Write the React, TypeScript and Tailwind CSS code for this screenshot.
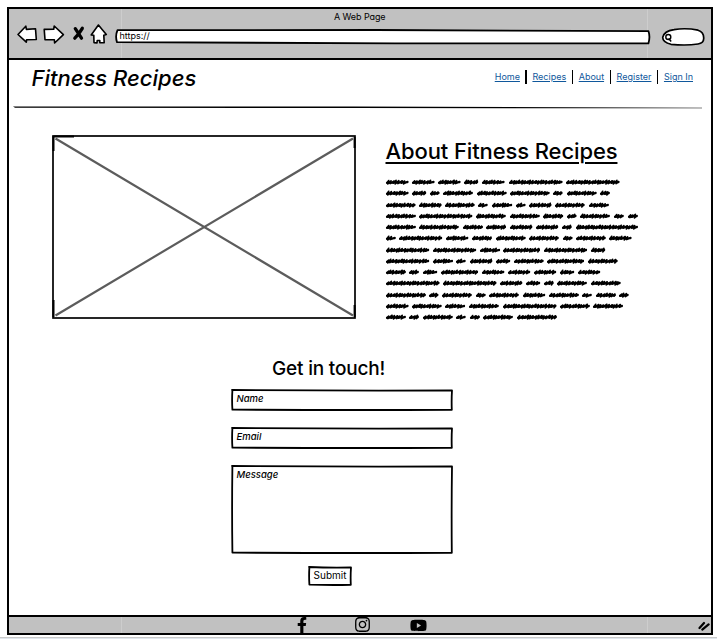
import React from "react";
import { FaFacebookF, FaInstagram, FaYoutube } from "react-icons/fa";

// Word widths of each scribbled line, in pixels.
const scribbles: number[][] = [
  [22.3, 22.3, 22.3, 14, 22.3, 53.3, 53.3],
  [22.3, 14, 9.3, 29.6, 29.4, 39.4, 9.3, 29.4, 9.6],
  [29.3, 22.3, 29.4, 9.4, 20, 9.3, 22.2, 29.4, 19.6],
  [29.6, 53.1, 29.5, 29.5, 20, 9.3, 29.6, 9.5, 9.6],
  [29.6, 39.5, 19.7, 19.8, 22.1, 22, 9.4, 61.7],
  [9.5, 43, 22.1, 19.6, 29.4, 29.5, 9.3, 29.5, 22.3],
  [43, 43, 19.9, 36.8, 42.9, 14],
  [43, 19.8, 9.4, 22.1, 14, 29.4, 36.9, 29.4],
  [19.6, 9.6, 14, 36.9, 22.1, 22, 22, 14, 22],
  [53.3, 53.2, 22.1, 14, 9.4, 29.6, 29.4],
  [39.6, 9.2, 29.5, 9.4, 29.5, 22, 29.6, 9.5, 19.6, 9.4],
  [22.3, 29.4, 19.9, 29.5, 53.2, 29.6, 29.7],
  [19.6, 9.6, 29.5, 9.4, 9.6, 29.6, 39.6],
];

function Scribble({ w, seed }: { w: number; seed: number }) {
  const y = 3;
  let d = `M0.8 ${y + 0.9}`;
  let i = seed;
  for (let x = 1.4; x < w - 2; x += 2 + ((i * 7) % 5) * 0.35) {
    const up = 1 + ((i * 3) % 4) * 0.25;
    d += ` L${(x + 1.3).toFixed(2)} ${(y - up).toFixed(2)} L${(x + 0.4).toFixed(2)} ${(y + 1.3 + ((i * 5) % 3) * 0.3).toFixed(2)}`;
    i++;
  }
  d += ` L${(w - 0.6).toFixed(2)} ${y - 0.5}`;
  return (
    <svg width={w} height="7" className="block shrink-0 overflow-visible" fill="none" stroke="#000">
      <path d={d} strokeWidth="1.6" strokeLinecap="round" strokeLinejoin="round" />
      <path d={`M0.9 ${y + 0.7} L${w - 0.8} ${y + 0.2}`} strokeWidth="2" strokeLinecap="round" />
    </svg>
  );
}

function Sketch({ w, h }: { w: number; h: number }) {
  return (
    <svg width={w} height={h} className="absolute inset-0" fill="none" stroke="#000" strokeLinecap="round" strokeLinejoin="round">
      <path d={`M1 1 Q${w / 2} 1.8 ${w - 1} 1.4 Q${w - 1.6} ${h / 2} ${w - 1.2} ${h - 1.2} Q${w / 2} ${h - 0.7} 1.4 ${h - 1.4} Q0.8 ${h / 2} 1.4 1`} strokeWidth="1.8" />
    </svg>
  );
}

function Field({ label, w, h, className }: { label: string; w: number; h: number; className: string }) {
  return (
    <div className={"relative w-[222px] " + className}>
      <Sketch w={w} h={h} />
      <div className="pl-[5.5px] pt-[4px] text-[9.5px] leading-[12px] font-medium italic">{label}</div>
    </div>
  );
}

function Sep() {
  return <span className="h-[14px] w-[1.5px] bg-black" />;
}

function Seams() {
  return (
    <>
      <span className="absolute inset-y-0 left-[112.5px] w-px bg-[#cdcdcd]" />
      <span className="absolute inset-y-0 left-[638.5px] w-px bg-[#cdcdcd]" />
    </>
  );
}

export default function App() {
  return (
    <div className="flex h-[639px] w-[717px] flex-col overflow-hidden bg-white font-['Inter','Liberation_Sans',sans-serif] text-black [font-feature-settings:'cv11','ss03']">
      <div className="ml-[6.5px] mt-[7px] flex h-[628px] w-[706.5px] flex-col border-2 border-black">
        <header className="relative h-[51px] border-b-2 border-black bg-[#c1c1c1]">
          <Seams />
          <div className="relative pt-[2px] text-center text-[9px] leading-[12px] tracking-[-0.01em]">A Web Page</div>
          <div className="relative flex h-[25px] items-center pl-[7px]">
            <svg width="93" height="24" viewBox="16 23 93 24" fill="#fff" stroke="#000" strokeWidth="1.6" strokeLinejoin="round" strokeLinecap="round">
              <path d="M18 33.5 L25.8 25.2 L26.4 28.4 L35.5 27.8 L36.3 38.5 L26.6 38.7 L26.3 41.2 Z" />
              <path d="M44.2 28.4 L53.7 28.3 L54.2 25 L63.4 33.7 L54.6 42 L54.4 38.8 L45 38.6 Z" />
              <path d="M75.3 27.7 L81.5 37.2 M82.3 27.3 Q79 33 74.8 37.2" fill="none" strokeWidth="3.3" />
              <path d="M98.4 24 L106.3 33.4 L103.8 34.2 L104.2 41.8 L99.8 41.8 L99.8 39.5 L97.2 39.5 L97 42 L94 41.6 L93.8 34.3 L91.2 34 Z" />
            </svg>
            <div className="relative ml-[6.5px] mt-[3px] h-[16px] w-[536px]">
              <svg width="536" height="16" className="absolute inset-0" fill="#fff" stroke="#000" strokeWidth="1.8" strokeLinejoin="round">
                <path d="M2.5 1.2 L260 1 L533.5 2.2 Q535.4 8 533.4 14.4 L280 14.3 L2 13.2 Q0 7 2.5 1.2Z" />
              </svg>
              <span className="relative block pl-[4.5px] pt-[1px] text-[9px] leading-[12px]">https://</span>
            </div>
            <svg width="44" height="20" viewBox="661 26 44 20" className="ml-[9.5px] mt-[2px]" fill="#fff" stroke="#000" strokeWidth="1.7">
              <path d="M674 28.6 Q686 26.6 698 29.2 Q704 31 703.7 37.5 Q703.7 42.2 698 43 Q686 44.8 671 43.3 Q662.3 41 662.8 36.2 Q664 30 674 28.6Z" />
              <circle cx="668.3" cy="36" r="2.5" strokeWidth="1.4" />
              <path d="M668.6 37.5 L671.2 40.5" strokeWidth="1.5" />
            </svg>
          </div>
        </header>

        <div className="flex h-[46px] items-start justify-between pl-[23px] pr-[18px]">
          <div className="pt-[5px] text-[22px] font-medium italic leading-[27px]">Fitness Recipes</div>
          <nav className="flex items-center gap-[5.5px] pt-[10px] text-[9px] leading-[14px] text-[#10589c]">
            <a className="underline underline-offset-1">Home</a>
            <Sep />
            <a className="underline underline-offset-1">Recipes</a>
            <Sep />
            <a className="underline underline-offset-1">About</a>
            <Sep />
            <a className="underline underline-offset-1">Register</a>
            <Sep />
            <a className="underline underline-offset-1">Sign In</a>
          </nav>
        </div>
        <svg width="690" height="4" className="ml-[4.5px] shrink-0">
          <path d="M0 0.6 L340 0.5 L689 1.8 L689 2.3 L340 2.1 L2 1.8Z" />
        </svg>

        <main className="grow">
          <section className="flex pl-[43.5px] pt-[25px]">
            <svg width="304" height="184" className="shrink-0" fill="none" stroke="#000">
              <rect x="1" y="1" width="302" height="182" strokeWidth="1.7" />
              <path d="M1.5 1.5 H22 M1.5 1 V16 M302.6 2 V13 M1.5 165 V182 M302.6 170 V182" strokeWidth="2" />
              <path d="M3.5 3.5 L301 180.5 M301 3.5 L3.5 180.5" stroke="#5c5c5c" strokeWidth="2.2" />
            </svg>
            <div className="ml-[29.5px]">
              <h1 className="mt-[2px] whitespace-nowrap text-[22px] font-medium leading-[28px] tracking-[-0.005em] underline decoration-2 underline-offset-[2.5px]">About Fitness Recipes</h1>
              <div className="mt-[14px] flex flex-col">
                {scribbles.map((line, r) => (
                  <div key={r} className="flex h-[11.27px] gap-[4px]">
                    {line.map((w, c) => (
                      <Scribble key={c} w={w} seed={r * 3 + c * 5 + Math.round(w)} />
                    ))}
                  </div>
                ))}
              </div>
            </div>
          </section>
          <section className="ml-[222.5px] mt-[32px] flex w-[222px] flex-col">
            <h2 className="ml-[41px] whitespace-nowrap text-[19px] font-medium leading-[24px] tracking-[-0.01em]">Get in touch!</h2>
            <Field label="Name" w={222} h={22} className="mt-[8px] h-[22px]" />
            <Field label="Email" w={222} h={22} className="mt-[16px] h-[22px]" />
            <Field label="Message" w={222} h={89} className="mt-[15.5px] h-[89px]" />
            <button className="relative ml-[77px] mt-[12.5px] h-[20px] w-[44px] text-[10px] leading-[20px]">
              <Sketch w={44} h={20} />
              <span className="relative -top-px">Submit</span>
            </button>
          </section>
        </main>

        <footer className="relative flex h-[18.5px] shrink-0 items-center border-t-2 border-black bg-[#c1c1c1]">
          <Seams />
          <FaFacebookF size={16} className="ml-[285px]" />
          <FaInstagram size={17} className="ml-[44.5px]" />
          <FaYoutube size={17} className="ml-[38.5px] mt-px" />
          <svg width="13" height="11" className="ml-[271px] mt-[3px]" stroke="#000" strokeWidth="2.2" strokeLinecap="round">
            <path d="M1.5 7 L6 2 M4.3 8.6 L10.6 3.4" />
          </svg>
        </footer>
      </div>
      <div className="mt-[2px] h-[2px] border-t border-[#c9c9c9] bg-[#e0e6ec]" />
    </div>
  );
}
